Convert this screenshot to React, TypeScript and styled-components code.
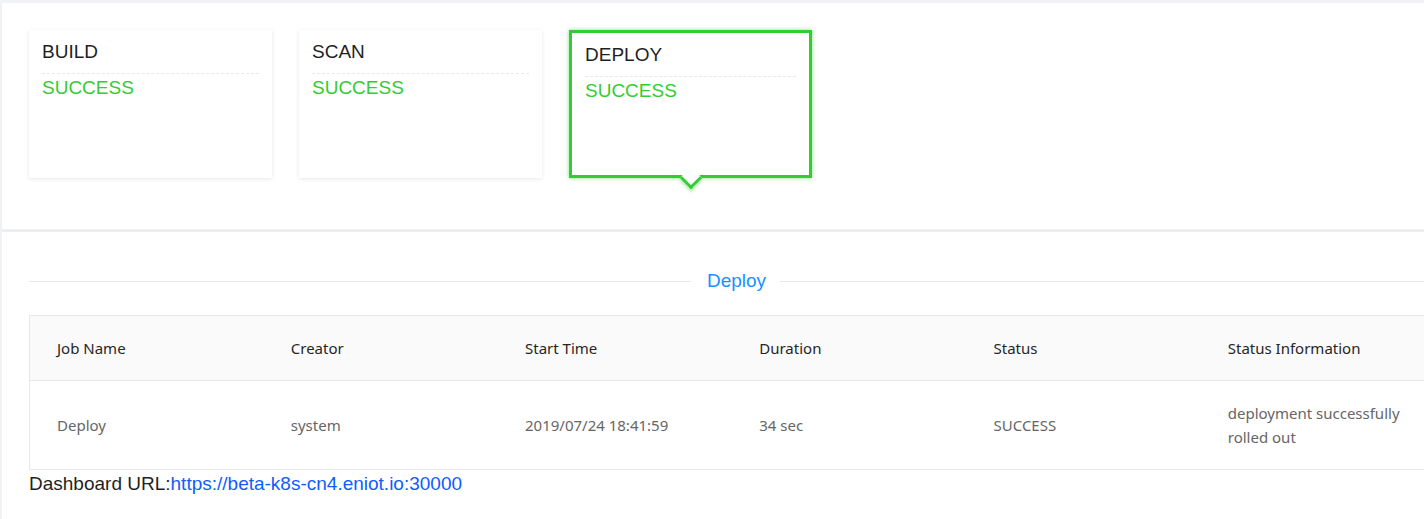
import React from "react"
import styled, { createGlobalStyle } from "styled-components"

const GlobalStyle = createGlobalStyle`
  html, body {
    margin: 0;
    padding: 0;
    background: #f0f2f5;
    overflow: hidden;
  }
  body {
    font-family: "Liberation Sans", Arial, sans-serif;
  }
`

const Page = styled.div`
  padding: 3px 0 0 2px;
  width: 1480px;
`

const StagePanel = styled.div`
  background: #fff;
  height: 227px;
  padding: 27px 27px 0;
  box-sizing: border-box;
  display: flex;
  gap: 27px;
  border-bottom: 1px solid #eef0f3;
  box-shadow: 0 1px 2px rgba(0, 0, 0, 0.03);
`

const StageCard = styled.div<{ $active?: boolean }>`
  position: relative;
  width: 243px;
  height: 148px;
  box-sizing: border-box;
  padding: 8px 13px 0;
  background: #fff;
  border: ${(p) => (p.$active ? "3px solid #33cc33" : "none")};
  box-shadow: ${(p) =>
    p.$active
      ? "0 0 4px rgba(51, 204, 51, 0.6)"
      : "0 1px 4px rgba(0, 0, 0, 0.1)"};

  ${(p) =>
    p.$active &&
    `
    &::after {
      content: "";
      position: absolute;
      left: 50%;
      bottom: -11px;
      margin-left: -8px;
      width: 16px;
      height: 16px;
      box-sizing: border-box;
      background: #fff;
      border-right: 3px solid #33cc33;
      border-bottom: 3px solid #33cc33;
      transform: rotate(45deg);
      box-shadow: 2px 2px 3px rgba(51, 204, 51, 0.35);
    }
  `}
`

const StageTitle = styled.div`
  font-size: 19px;
  line-height: 28px;
  color: #1f1f1f;
  padding-bottom: 7px;
  border-bottom: 1px dashed #e8e8e8;
`

const StageStatus = styled.div`
  font-size: 19px;
  line-height: 28px;
  color: #33cc33;
`

const DetailPanel = styled.div`
  background: #fff;
  margin-top: 2px;
  padding: 35px 27px 40px;
  width: 1413px;
`

const Divider = styled.div`
  display: flex;
  align-items: center;
  height: 28px;
  margin-bottom: 20px;
  &::before,
  &::after {
    content: "";
    flex: 1;
    border-top: 1px solid #e8e8e8;
  }
`

const DividerText = styled.span`
  padding: 0 14px 0 16px;
  font-size: 19px;
  color: #1890ff;
`

const Table = styled.table`
  width: 1406px;
  border-collapse: collapse;
  table-layout: fixed;
  font-family: "Noto Sans", "Open Sans", sans-serif;
  font-size: 15px;
  border-top: 1px solid #e8e8e8;
  border-left: 1px solid #e8e8e8;
`

const HeadCell = styled.th`
  text-align: left;
  font-weight: 400;
  color: #262626;
  background: #fafafa;
  padding: 20px 27px;
  line-height: 24px;
  border-bottom: 1px solid #e8e8e8;
`

const Cell = styled.td`
  color: #666;
  padding: 20px 27px;
  line-height: 24px;
  border-bottom: 1px solid #e8e8e8;
`

const UrlLine = styled.div`
  font-size: 19px;
  line-height: 26px;
  color: #1f1f1f;
  padding-top: 1px;
`

const UrlLink = styled.a`
  color: #0f5cff;
  text-decoration: none;
`

const stages = [
  { name: "BUILD", status: "SUCCESS" },
  { name: "SCAN", status: "SUCCESS" },
  { name: "DEPLOY", status: "SUCCESS", active: true },
]

const columns = [
  "Job Name",
  "Creator",
  "Start Time",
  "Duration",
  "Status",
  "Status Information",
]

const row = [
  "Deploy",
  "system",
  "2019/07/24 18:41:59",
  "34 sec",
  "SUCCESS",
  "deployment successfully rolled out",
]

export default function App() {
  return (
    <Page>
      <GlobalStyle />
      <StagePanel>
        {stages.map((s) => (
          <StageCard key={s.name} $active={s.active}>
            <StageTitle>{s.name}</StageTitle>
            <StageStatus>{s.status}</StageStatus>
          </StageCard>
        ))}
      </StagePanel>
      <DetailPanel>
        <Divider>
          <DividerText>Deploy</DividerText>
        </Divider>
        <Table>
          <thead>
            <tr>
              {columns.map((c) => (
                <HeadCell key={c}>{c}</HeadCell>
              ))}
            </tr>
          </thead>
          <tbody>
            <tr>
              {row.map((v, i) => (
                <Cell key={i}>{v}</Cell>
              ))}
            </tr>
          </tbody>
        </Table>
        <UrlLine>
          Dashboard URL:
          <UrlLink href="#">https://beta-k8s-cn4.eniot.io:30000</UrlLink>
        </UrlLine>
      </DetailPanel>
    </Page>
  )
}
